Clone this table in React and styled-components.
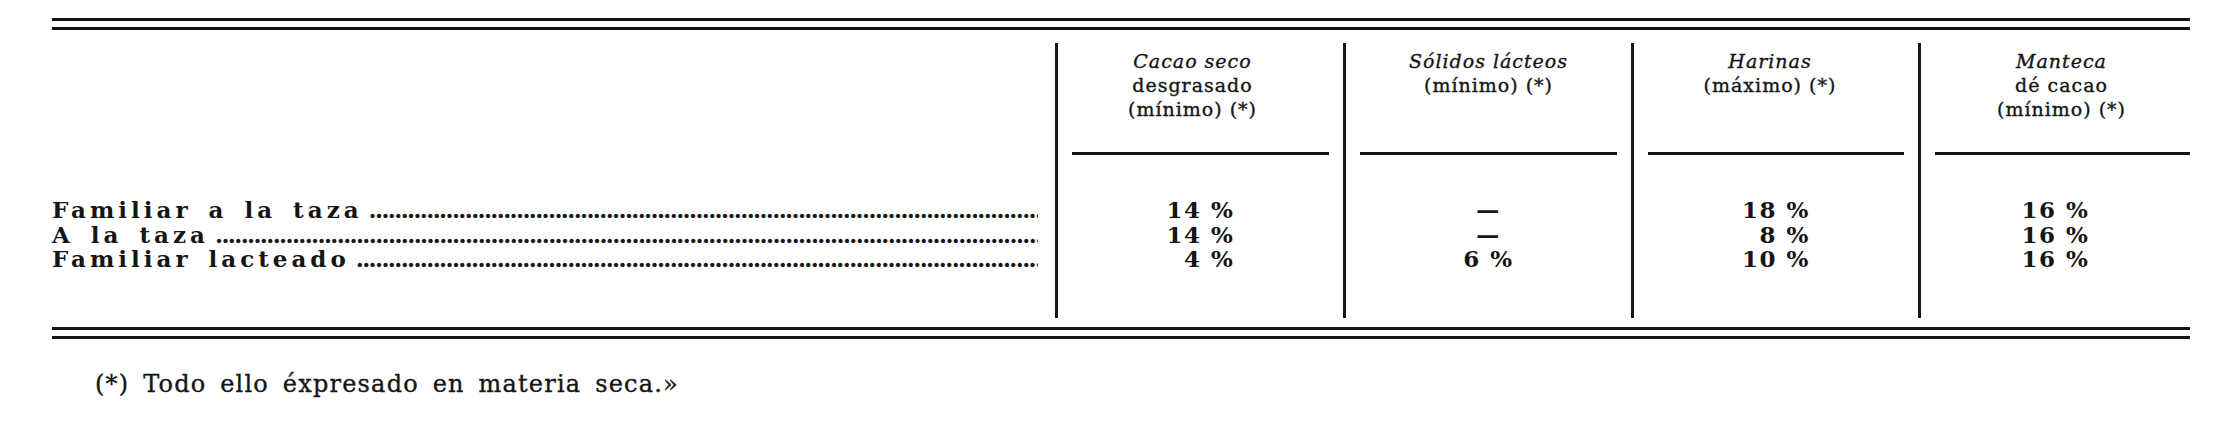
import React from "react";
import styled, { createGlobalStyle } from "styled-components";

const GlobalStyle = createGlobalStyle`
  body {
    margin: 0;
    background: #fff;
  }
`;

const ink = "#151515";

const Page = styled.div`
  width: 2222px;
  height: 428px;
  box-sizing: border-box;
  padding: 18px 32px 0 52px;
  color: ${ink};
  font-family: "DejaVu Serif", "Liberation Serif", serif;
  overflow: hidden;
`;

const DoubleRule = styled.div`
  height: 6px;
  border-top: 3px solid ${ink};
  border-bottom: 3px solid ${ink};
  margin-top: ${props => props.gap || 0}px;
`;

const Table = styled.div`
  display: grid;
  grid-template-columns: 1003px 288px 288px 287px 1fr;
  height: 275px;
  margin-top: 13px;
`;

const LabelCol = styled.div`
  padding: 155px 17px 0 0;
`;

const Row = styled.div`
  display: flex;
  align-items: baseline;
  height: 24.5px;
  line-height: 24.5px;
  font-size: 23px;
  font-weight: bold;
`;

const Label = styled.span`
  white-space: nowrap;
  letter-spacing: 4px;
  word-spacing: 5px;
`;

const Leader = styled.span`
  flex: 1;
  overflow: hidden;
  white-space: nowrap;
  letter-spacing: -1.6px;
  margin-left: 6px;
`;

const Col = styled.div`
  display: flex;
  flex-direction: column;
  border-left: 3px solid ${ink};
`;

const Head = styled.div`
  height: 109px;
  box-sizing: border-box;
  padding: 6px ${props => (props.shift < 0 ? -props.shift * 2 : 0)}px 0
    ${props => (props.shift > 0 ? props.shift * 2 : 0)}px;
  text-align: center;
  font-size: 19px;
  line-height: 24px;
  letter-spacing: 1px;
  -webkit-text-stroke: 0.35px ${ink};
`;

const HeadLine = styled.div`
  font-style: ${props => (props.italic ? "italic" : "normal")};
`;

const Underline = styled.div`
  height: 3px;
  background: ${ink};
  margin: 0 ${props => (props.last ? 0 : 14)}px 0 14px;
`;

const Values = styled.div`
  display: flex;
  justify-content: center;
  padding-top: 43px;
`;

const Stack = styled.div`
  display: inline-flex;
  flex-direction: column;
  align-items: ${props => props.align || "flex-end"};
  font-size: 23px;
  font-weight: bold;
  line-height: 24.5px;
  letter-spacing: 1.5px;
`;

const Value = styled.div`
  height: 24.5px;
  white-space: nowrap;
`;

const Footnote = styled.div`
  margin-top: 32px;
  padding-left: 43px;
  font-size: 24px;
  line-height: 26px;
  letter-spacing: 1.2px;
  word-spacing: 5px;
  white-space: nowrap;
  -webkit-text-stroke: 0.35px ${ink};
`;

const rows = ["Familiar a la taza", "A la taza", "Familiar lacteado"];

const columns = [
  {
    head: [["Cacao seco", true], ["desgrasado"], ["(mínimo) (*)"]],
    values: ["14 %", "14 %", "4 %"],
    align: "flex-end",
    shift: -8
  },
  {
    head: [["Sólidos lácteos", true], ["(mínimo) (*)"]],
    values: ["—", "—", "6 %"],
    align: "center",
    shift: 0
  },
  {
    head: [["Harinas", true], ["(máximo) (*)"]],
    values: ["18 %", "8 %", "10 %"],
    align: "flex-end",
    shift: -6
  },
  {
    head: [["Manteca", true], ["dé cacao"], ["(mínimo) (*)"]],
    values: ["16 %", "16 %", "16 %"],
    align: "flex-end",
    shift: 6
  }
];

const dots = ".".repeat(220);

export default function App() {
  return (
    <Page>
      <GlobalStyle />
      <DoubleRule />
      <Table>
        <LabelCol>
          {rows.map(r => (
            <Row key={r}>
              <Label>{r}</Label>
              <Leader>{dots}</Leader>
            </Row>
          ))}
        </LabelCol>
        {columns.map((c, i) => (
          <Col key={i}>
            <Head shift={c.shift}>
              {c.head.map(([text, italic]) => (
                <HeadLine key={text} italic={italic}>
                  {text}
                </HeadLine>
              ))}
            </Head>
            <Underline last={i === columns.length - 1} />
            <Values>
              <Stack align={c.align}>
                {c.values.map((v, j) => (
                  <Value key={j}>{v}</Value>
                ))}
              </Stack>
            </Values>
          </Col>
        ))}
      </Table>
      <DoubleRule gap={9} />
      <Footnote>(*) Todo ello éxpresado en materia seca.»</Footnote>
    </Page>
  );
}
